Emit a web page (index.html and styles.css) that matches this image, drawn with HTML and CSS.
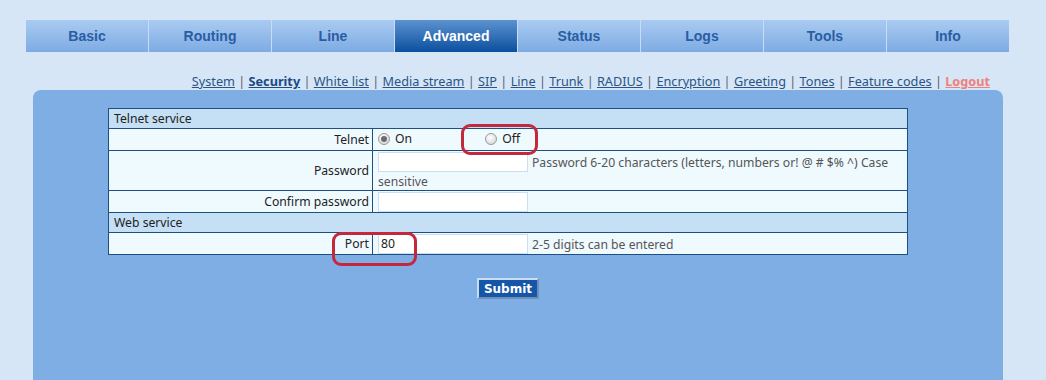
FILE: index.html
```html
<!DOCTYPE html>
<html lang="en">
<head>
    <meta charset="UTF-8">
    <title>Advanced - Security</title>
    <link rel="stylesheet" href="styles.css">
</head>
<body>
    <!-- main menu -->
    <ul class="main-menu">
        <li><a href="#">Basic</a></li>
        <li><a href="#">Routing</a></li>
        <li><a href="#">Line</a></li>
        <li class="active"><a href="#">Advanced</a></li>
        <li><a href="#">Status</a></li>
        <li><a href="#">Logs</a></li>
        <li><a href="#">Tools</a></li>
        <li><a href="#">Info</a></li>
    </ul>

    <!-- sub menu -->
    <div class="sub-menu">
        <a href="#">System</a> <span class="sep">|</span>
        <a href="#" class="current">Security</a> <span class="sep">|</span>
        <a href="#">White list</a> <span class="sep">|</span>
        <a href="#">Media stream</a> <span class="sep">|</span>
        <a href="#">SIP</a> <span class="sep">|</span>
        <a href="#">Line</a> <span class="sep">|</span>
        <a href="#">Trunk</a> <span class="sep">|</span>
        <a href="#">RADIUS</a> <span class="sep">|</span>
        <a href="#">Encryption</a> <span class="sep">|</span>
        <a href="#">Greeting</a> <span class="sep">|</span>
        <a href="#">Tones</a> <span class="sep">|</span>
        <a href="#">Feature codes</a> <span class="sep">|</span>
        <a href="#" class="logout">Logout</a>
    </div>

    <div class="panel">
        <table class="settings">
            <tr class="group"><td colspan="2">Telnet service</td></tr>
            <tr class="row-telnet">
                <td class="label">Telnet</td>
                <td class="value">
                    <label class="radio on"><span class="dot checked"></span>On</label>
                    <label class="radio off"><span class="dot"></span>Off</label>
                </td>
            </tr>
            <tr class="row-password">
                <td class="label">Password</td>
                <td class="value"><span class="field"></span><span class="hint">Password 6-20 characters (letters, numbers or! @ # $% ^) Case sensitive</span></td>
            </tr>
            <tr class="row-confirm">
                <td class="label">Confirm password</td>
                <td class="value"><span class="field"></span></td>
            </tr>
            <tr class="group"><td colspan="2">Web service</td></tr>
            <tr class="row-port">
                <td class="label">Port</td>
                <td class="value"><span class="field">80</span><span class="hint">2-5 digits can be entered</span></td>
            </tr>
        </table>
        <div class="actions">
            <button class="submit-button">Submit</button>
        </div>

        <!-- red annotation marks -->
        <div class="mark mark-off"></div>
        <div class="mark mark-port"></div>
    </div>
</body>
</html>
```

FILE: styles.css
```css
body {
    margin: 0;
    background-color: #d6e6f7;
    font-family: "Noto Sans", sans-serif;
    font-size: 13px;
    position: relative;
}

/* main menu ======================================================= */

.main-menu {
    list-style: none;
    margin: 20px 0 0 26px;
    padding: 0;
    width: 983px;
    height: 32px;
    display: flex;
}

.main-menu li {
    flex: 1;
    display: flex;
    align-items: center;
    justify-content: center;
    background: linear-gradient(#a9cbf1, #7dabe3);
    border-left: 1px solid #c8dcf3;
}

.main-menu li:first-child {
    border-left: none;
}

.main-menu a {
    font-family: "Liberation Sans", Arial, sans-serif;
    font-size: 14px;
    font-weight: bold;
    color: #2a5da3;
    text-decoration: none;
}

.main-menu li.active {
    background: linear-gradient(#5c93d0, #0b4f9e);
}

.main-menu li.active a {
    color: #ffffff;
}

/* sub menu ======================================================== */

.sub-menu {
    text-align: right;
    padding: 20px 56px 0 0;
    height: 18px;
    line-height: 18px;
    font-size: 12.7px;
    color: #2b4b73;
}

.sub-menu a {
    color: #2b5486;
    text-decoration: underline;
}

.sub-menu a.current {
    font-weight: bold;
    color: #1b4a84;
}

.sub-menu a.logout {
    font-weight: bold;
    color: #f0807a;
}

.sub-menu .sep {
    color: #5a5a6a;
}

/* panel =========================================================== */

.panel {
    margin: 0 0 0 33px;
    width: 970px;
    height: 272px;
    background-color: #7eaee4;
    border-radius: 8px 8px 0 0;
    padding-top: 18px;
}

.settings {
    margin-left: 75px;
    width: 800px;
    border-collapse: collapse;
    color: #222;
    font-size: 12.2px;
}

.settings td {
    border: 1px solid #1f4e80;
    padding: 0 3px;
}

.settings tr.group td {
    background-color: #c5dff5;
    height: 19px;
    padding-left: 5px;
}

.settings td.label {
    width: 257px;
    text-align: right;
    background-color: #effaff;
}

.settings td.value {
    background-color: #effaff;
    padding-left: 5px;
    color: #555;
}

.row-telnet td,
.row-confirm td,
.row-port td {
    height: 21px;
}

.row-password td {
    height: 38px;
}

.radio {
    display: inline-flex;
    align-items: center;
    color: #222;
}

.radio.on {
    width: 104px;
}

.dot {
    display: inline-block;
    width: 12px;
    height: 12px;
    border-radius: 50%;
    border: 1px solid #9a9a9a;
    background: radial-gradient(circle at 40% 35%, #ffffff, #cfcfcf);
    margin-right: 5px;
    box-sizing: border-box;
    position: relative;
}

.dot.checked::after {
    content: "";
    position: absolute;
    left: 2px;
    top: 2px;
    width: 6px;
    height: 6px;
    border-radius: 50%;
    background-color: #6b6b6b;
}

.field {
    display: inline-block;
    vertical-align: middle;
    width: 146px;
    height: 18px;
    line-height: 18px;
    border: 1px solid #c9def0;
    background-color: #ffffff;
    padding-left: 2px;
    margin-right: 4px;
    color: #222;
}

.hint {
    vertical-align: middle;
}

.row-password .value {
    line-height: 17px;
    padding-top: 1px;
}

.actions {
    width: 800px;
    margin-left: 75px;
    text-align: center;
    padding-top: 23px;
}

.submit-button {
    font-family: "DejaVu Sans", Tahoma, sans-serif;
    font-size: 12px;
    font-weight: bold;
    color: #ffffff;
    background-color: #1556a8;
    border: 2px solid;
    border-color: #c9dcf2 #6e8fb8 #6e8fb8 #c9dcf2;
    padding: 2px 5px;
    height: 21px;
    line-height: 14px;
}

/* annotation marks ================================================ */

.mark {
    position: absolute;
    border: 3px solid #c4283d;
    border-radius: 9px;
    box-sizing: border-box;
}

.mark-off {
    left: 461px;
    top: 124px;
    width: 77px;
    height: 31px;
}

.mark-port {
    left: 332px;
    top: 232px;
    width: 85px;
    height: 34px;
}
```
